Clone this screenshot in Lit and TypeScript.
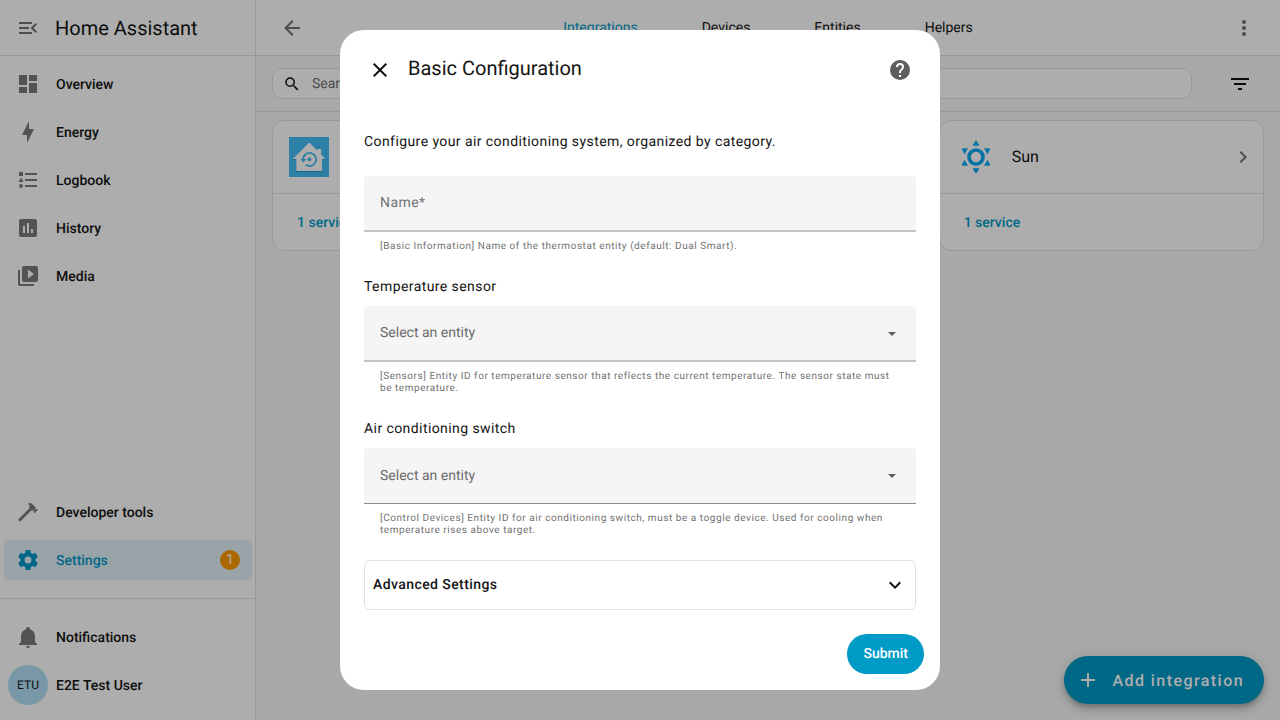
import { LitElement, html, css } from "lit";
import { customElement, property } from "lit/decorators.js";

const ICONS: Record<string, string> = {
  menuOpen:
    "M21,15.61L19.59,17L14.58,12L19.59,7L21,8.39L17.44,12L21,15.61M3,6H16V8H3V6M3,13V11H13V13H3M3,18V16H16V18H3Z",
  dashboard: "M13,3V9H21V3M13,21H21V11H13M3,21H11V15H3M3,13H11V3H3V13Z",
  bolt: "M11 15H6L13 1V9H18L11 23V15Z",
  logbook:
    "M5,9.5L7.5,14H2.5L5,9.5M3,4H7V8H3V4M5,20A2,2 0 0,0 7,18A2,2 0 0,0 5,16A2,2 0 0,0 3,18A2,2 0 0,0 5,20M9,5V7H21V5H9M9,19H21V17H9V19M9,11V13H21V11H9Z",
  chart:
    "M9 17H7V10H9V17M13 17H11V7H13V17M17 17H15V13H17V17M19 3H5C3.89 3 3 3.89 3 5V19C3 20.11 3.89 21 5 21H19C20.11 21 21 20.11 21 19V5C21 3.89 20.11 3 19 3Z",
  media:
    "M4,6H2V20A2,2 0 0,0 4,22H18V20H4V6M20,2H8A2,2 0 0,0 6,4V16A2,2 0 0,0 8,18H20A2,2 0 0,0 22,16V4A2,2 0 0,0 20,2M12,14.5V5.5L18,10L12,14.5Z",
  hammer:
    "M2 19.63L13.43 8.2L12.72 7.5L14.14 6.07L12 3.89C13.2 2.7 15.09 2.7 16.27 3.89L19.87 7.5L18.45 8.91H21.29L22 9.62L18.45 13.21L17.74 12.5V9.62L16.27 11.04L15.56 10.33L4.13 21.76L2 19.63Z",
  cog: "M12,15.5A3.5,3.5 0 0,1 8.5,12A3.5,3.5 0 0,1 12,8.5A3.5,3.5 0 0,1 15.5,12A3.5,3.5 0 0,1 12,15.5M19.43,12.97C19.47,12.65 19.5,12.33 19.5,12C19.5,11.67 19.47,11.34 19.43,11L21.54,9.37C21.73,9.22 21.78,8.95 21.66,8.73L19.66,5.27C19.54,5.05 19.27,4.96 19.05,5.05L16.56,6.05C16.04,5.66 15.5,5.32 14.87,5.07L14.5,2.42C14.46,2.18 14.25,2 14,2H10C9.75,2 9.54,2.18 9.5,2.42L9.13,5.07C8.5,5.32 7.96,5.66 7.44,6.05L4.95,5.05C4.73,4.96 4.46,5.05 4.34,5.27L2.34,8.73C2.21,8.95 2.27,9.22 2.46,9.37L4.57,11C4.53,11.34 4.5,11.67 4.5,12C4.5,12.33 4.53,12.65 4.57,12.97L2.46,14.63C2.27,14.78 2.21,15.05 2.34,15.27L4.34,18.73C4.46,18.95 4.73,19.03 4.95,18.95L7.44,17.94C7.96,18.34 8.5,18.68 9.13,18.93L9.5,21.58C9.54,21.82 9.75,22 10,22H14C14.25,22 14.46,21.82 14.5,21.58L14.87,18.93C15.5,18.67 16.04,18.34 16.56,17.94L19.05,18.95C19.27,19.03 19.54,18.95 19.66,18.73L21.66,15.27C21.78,15.05 21.73,14.78 21.54,14.63L19.43,12.97Z",
  bell: "M21,19V20H3V19L5,17V11C5,7.9 7.03,5.17 10,4.29C10,4.19 10,4.1 10,4A2,2 0 0,1 12,2A2,2 0 0,1 14,4C14,4.1 14,4.19 14,4.29C16.97,5.17 19,7.9 19,11V17L21,19M14,21A2,2 0 0,1 12,23A2,2 0 0,1 10,21",
  back: "M20,11V13H8L13.5,18.5L12.08,19.92L4.16,12L12.08,4.08L13.5,5.5L8,11H20Z",
  search:
    "M9.5,3A6.5,6.5 0 0,1 16,9.5C16,11.11 15.41,12.59 14.44,13.73L14.71,14H15.5L20.5,19L19,20.5L14,15.5V14.71L13.73,14.44C12.59,15.41 11.11,16 9.5,16A6.5,6.5 0 0,1 3,9.5A6.5,6.5 0 0,1 9.5,3M9.5,5C7,5 5,7 5,9.5C5,12 7,14 9.5,14C12,14 14,12 14,9.5C14,7 12,5 9.5,5Z",
  dots: "M12,16A2,2 0 0,1 14,18A2,2 0 0,1 12,20A2,2 0 0,1 10,18A2,2 0 0,1 12,16M12,10A2,2 0 0,1 14,12A2,2 0 0,1 12,14A2,2 0 0,1 10,12A2,2 0 0,1 12,10M12,4A2,2 0 0,1 14,6A2,2 0 0,1 12,8A2,2 0 0,1 10,6A2,2 0 0,1 12,4Z",
  filter: "M6,13H18V11H6M3,6V8H21V6M10,18H14V16H10V18Z",
  right: "M8.59,16.58L13.17,12L8.59,7.41L10,6L16,12L10,18L8.59,16.58Z",
  down: "M7.41,8.58L12,13.17L16.59,8.58L18,10L12,16L6,10L7.41,8.58Z",
  close:
    "M19,6.41L17.59,5L12,10.59L6.41,5L5,6.41L10.59,12L5,17.59L6.41,19L12,13.41L17.59,19L19,17.59L13.41,12L19,6.41Z",
  help: "M15.07,11.25L14.17,12.17C13.45,12.89 13,13.5 13,15H11V14.5C11,13.39 11.45,12.39 12.17,11.67L13.41,10.41C13.78,10.05 14,9.55 14,9C14,7.89 13.1,7 12,7A2,2 0 0,0 10,9H8A4,4 0 0,1 12,5A4,4 0 0,1 16,9C16,9.88 15.64,10.67 15.07,11.25M13,19H11V17H13M12,2A10,10 0 0,0 2,12A10,10 0 0,0 12,22A10,10 0 0,0 22,12C22,6.47 17.5,2 12,2Z",
  plus: "M19,13H13V19H11V13H5V11H11V5H13V11H19V13Z",
  caret: "M8,10L12,14L16,10H8Z",
  sun: "M12,6.7A5.3,5.3 0 0,1 17.3,12A5.3,5.3 0 0,1 12,17.3A5.3,5.3 0 0,1 6.7,12A5.3,5.3 0 0,1 12,6.7M12,8.9A3.1,3.1 0 0,0 8.9,12A3.1,3.1 0 0,0 12,15.1A3.1,3.1 0 0,0 15.1,12A3.1,3.1 0 0,0 12,8.9M12,2L14.1,5.2H9.9ZM12,22L9.9,18.8H14.1ZM3.34,6.9L7.2,6.8L5.1,10.4ZM20.66,6.9L18.9,10.4L16.8,6.8ZM3.34,17.1L5.1,13.6L7.2,17.2ZM20.66,17.1L16.8,17.2L18.9,13.6Z",
};

const base = css`
  * {
    box-sizing: border-box;
  }
  a {
    color: inherit;
    text-decoration: none;
  }
  button {
    font: inherit;
    color: inherit;
    letter-spacing: inherit;
    text-rendering: inherit;
    background: none;
    border: 0;
    padding: 0;
    cursor: pointer;
  }
  input,
  select {
    text-rendering: inherit;
  }
  h1,
  h2,
  p {
    margin: 0;
    font-weight: 400;
  }
`;

@customElement("ha-icon")
class HaIcon extends LitElement {
  @property() name = "";
  static styles = css`
    :host {
      display: block;
      flex: none;
      width: 24px;
      height: 24px;
    }
    svg {
      display: block;
      width: 100%;
      height: 100%;
      fill: currentColor;
    }
  `;
  render() {
    return html`<svg viewBox="0 0 24 24" aria-hidden="true">
      <path d=${ICONS[this.name] ?? ""}></path>
    </svg>`;
  }
}

@customElement("ha-sidebar")
class HaSidebar extends LitElement {
  static styles = [
    base,
    css`
      :host {
        display: flex;
        flex-direction: column;
        background: #fff;
        border-right: 1px solid #e0e0e0;
        font-size: 14px;
        font-weight: 500;
      }
      .head {
        display: flex;
        align-items: center;
        gap: 15px;
        height: 56px;
        padding: 0 16px;
        border-bottom: 1px solid #e0e0e0;
      }
      .toggle {
        color: #727272;
      }
      .title {
        font-size: 20px;
        line-height: 24px;
      }
      .list {
        display: flex;
        flex-direction: column;
        gap: 8px;
        padding: 8px 3px 8px 4px;
      }
      .lower {
        margin-top: auto;
        padding-bottom: 18px;
      }
      .user {
        border-top: 1px solid #e0e0e0;
        padding-top: 18px;
        padding-bottom: 15px;
      }
      .item {
        display: flex;
        align-items: center;
        gap: 16px;
        height: 40px;
        padding: 0 12px;
        border-radius: 4px;
      }
      .item ha-icon {
        color: #7b7b7b;
      }
      .label {
        flex: 1;
        padding-top: 2px;
        line-height: 20px;
      }
      .active {
        background: #e0f2f7;
        color: #009ac7;
      }
      .active ha-icon {
        color: #009ac7;
      }
      .badge {
        display: grid;
        place-items: center;
        width: 20px;
        height: 20px;
        border-radius: 10px;
        background: #ff9800;
        color: #fff;
        font-weight: 400;
      }
      .profile {
        gap: 8px;
        padding: 0 4px;
      }
      .avatar {
        display: grid;
        place-items: center;
        width: 40px;
        height: 40px;
        border-radius: 20px;
        background: #b3e0f6;
        font-size: 12px;
        font-weight: 400;
      }
    `,
  ];
  item(icon: string, label: string) {
    return html`<a class="item" href="#">
      <ha-icon name=${icon}></ha-icon><span class="label">${label}</span>
    </a>`;
  }
  render() {
    return html`
      <div class="head">
        <button class="toggle" aria-label="Collapse sidebar">
          <ha-icon name="menuOpen"></ha-icon>
        </button>
        <h1 class="title">Home Assistant</h1>
      </div>
      <nav class="list">
        ${this.item("dashboard", "Overview")} ${this.item("bolt", "Energy")}
        ${this.item("logbook", "Logbook")} ${this.item("chart", "History")}
        ${this.item("media", "Media")}
      </nav>
      <nav class="list lower">
        ${this.item("hammer", "Developer tools")}
        <a class="item active" href="#" aria-current="page">
          <ha-icon name="cog"></ha-icon><span class="label">Settings</span>
          <span class="badge">1</span>
        </a>
      </nav>
      <nav class="list user">
        ${this.item("bell", "Notifications")}
        <a class="item profile" href="#">
          <span class="avatar">ETU</span><span class="label">E2E Test User</span>
        </a>
      </nav>
    `;
  }
}

@customElement("ha-integrations")
class HaIntegrations extends LitElement {
  static styles = [
    base,
    css`
      :host {
        position: relative;
        display: flex;
        flex-direction: column;
        min-width: 0;
        background: #fafafa;
        font-size: 14px;
      }
      .bar {
        display: flex;
        align-items: center;
        height: 56px;
        padding: 0 24px;
        background: #fff;
        border-bottom: 1px solid #e0e0e0;
        color: #727272;
      }
      .tabs {
        display: flex;
        flex: 1;
        justify-content: center;
        color: #141414;
      }
      .tab {
        padding: 0 32px;
        line-height: 20px;
      }
      .current {
        color: #009ac7;
      }
      .tools {
        display: flex;
        align-items: center;
        gap: 36px;
        height: 56px;
        padding: 0 28px 0 16px;
        border-bottom: 1px solid #e0e0e0;
      }
      .search {
        display: flex;
        flex: 1;
        align-items: center;
        gap: 11px;
        height: 31px;
        padding: 0 10px;
        background: #fff;
        border: 1px solid #e0e0e0;
        border-radius: 10px;
      }
      .search ha-icon {
        width: 18px;
        height: 18px;
      }
      .query {
        flex: 1;
        min-width: 0;
        border: 0;
        outline: 0;
        background: none;
        padding: 0;
        font: inherit;
      }
      .query::placeholder {
        color: #727272;
        opacity: 1;
      }
      .grid {
        display: grid;
        grid-template-columns: repeat(3, minmax(0, 1fr));
        gap: 8px;
        padding: 8px 16px;
      }
      .card {
        background: #fff;
        border: 1px solid #e0e0e0;
        border-radius: 12px;
      }
      .top {
        display: flex;
        align-items: center;
        gap: 16px;
        height: 73px;
        padding: 0 8px 0 16px;
        border-bottom: 1px solid #e0e0e0;
      }
      .logo {
        display: block;
        width: 40px;
        height: 40px;
      }
      .sun {
        color: #03a9f4;
      }
      .name {
        flex: 1;
        font-size: 16px;
        line-height: 24px;
      }
      .chev {
        color: #727272;
      }
      .foot {
        display: flex;
        align-items: center;
        height: 56px;
        padding: 2px 24px 0;
        color: #009ac7;
        font-weight: 500;
      }
      .fab {
        position: absolute;
        right: 16px;
        bottom: 16px;
        display: flex;
        align-items: center;
        gap: 12px;
        height: 48px;
        padding: 0 20px 0 12px;
        border-radius: 24px;
        background: #009ac7;
        color: #fff;
        font-size: 16px;
        font-weight: 500;
        letter-spacing: 0.09em;
        box-shadow:
          0 3px 5px -1px rgba(0, 0, 0, 0.2),
          0 6px 10px 0 rgba(0, 0, 0, 0.14),
          0 1px 18px 0 rgba(0, 0, 0, 0.12);
      }
    `,
  ];
  card(logo: unknown, name: string) {
    return html`<article class="card">
      <div class="top">
        ${logo}
        <h2 class="name">${name}</h2>
        <ha-icon class="chev" name="right"></ha-icon>
      </div>
      <div class="foot"><a href="#">1 service</a></div>
    </article>`;
  }
  render() {
    const backup = html`<svg class="logo" viewBox="0 0 40 40" aria-hidden="true">
      <rect width="40" height="40" fill="#41bdf5"></rect>
      <path
        d="M3.7 22.5L20.3 6.5L28.3 14V13H32.3V18L36.3 22.5H33V34.8H7.3V22.5Z"
        fill="#1c7fac"
      ></path>
      <path
        d="M3.7 22L20.3 5.5L28.3 13.5V12H32.3V17.5L36.3 22H33V34H7.3V22Z"
        fill="#fff"
      ></path>
      <path
        d="M14 22.3A6.6 6.6 0 1 1 16.7 27.8"
        fill="none"
        stroke="#41bdf5"
        stroke-width="1.8"
      ></path>
      <path d="M11.5 22H17.5L14.2 25.5Z" fill="#41bdf5"></path>
      <circle cx="20.5" cy="22.3" r="1.9" fill="#41bdf5"></circle>
    </svg>`;
    return html`
      <header class="bar">
        <button aria-label="Back"><ha-icon name="back"></ha-icon></button>
        <nav class="tabs">
          <a class="tab current" href="#">Integrations</a>
          <a class="tab" href="#">Devices</a>
          <a class="tab" href="#">Entities</a>
          <a class="tab" href="#">Helpers</a>
        </nav>
        <button aria-label="More"><ha-icon name="dots"></ha-icon></button>
      </header>
      <div class="tools">
        <div class="search">
          <ha-icon name="search"></ha-icon>
          <input
            class="query"
            type="search"
            aria-label="Search integrations"
            placeholder="Search integrations"
          />
        </div>
        <button aria-label="Filter"><ha-icon name="filter"></ha-icon></button>
      </div>
      <main class="grid">
        ${this.card(backup, "Backup")} ${this.card(backup, "Home Assistant")}
        ${this.card(html`<ha-icon class="logo sun" name="sun"></ha-icon>`, "Sun")}
      </main>
      <button class="fab"><ha-icon name="plus"></ha-icon>Add integration</button>
    `;
  }
}

@customElement("config-dialog")
class ConfigDialog extends LitElement {
  static styles = [
    base,
    css`
      :host {
        display: flex;
        flex-direction: column;
        width: 100%;
        max-width: 600px;
        background: #fff;
        border-radius: 24px;
        font-size: 14px;
      }
      .head {
        display: flex;
        align-items: center;
        gap: 16px;
        padding: 28px 28px 24px;
      }
      .title {
        flex: 1;
        font-size: 20px;
        line-height: 20px;
        padding-bottom: 4px;
      }
      .help {
        color: #5e5e5e;
      }
      .body {
        padding: 0 24px;
        letter-spacing: 0.03em;
      }
      .intro,
      .caption {
        display: block;
        line-height: 20px;
      }
      .intro {
        padding: 26px 0 24px;
      }
      .caption {
        padding: 1px 0 9px;
      }
      .field {
        display: block;
        width: 100%;
        height: 56px;
        padding: 0 16px;
        border: 0;
        border-bottom: 2px solid #c4c4c4;
        border-radius: 4px 4px 0 0;
        background: #f5f5f5;
        color: #6b6b6b;
        font: inherit;
        outline: 0;
        appearance: none;
      }
      .field::placeholder {
        color: #727272;
        opacity: 1;
      }
      .text {
        letter-spacing: 0.03em;
      }
      .thin {
        border-bottom: 1px solid #8c8c8c;
      }
      .pick {
        display: grid;
        align-items: center;
      }
      .pick > * {
        grid-area: 1 / 1;
      }
      .pick ha-icon {
        justify-self: end;
        margin-right: 12px;
        color: #5e5e5e;
        pointer-events: none;
      }
      .hint {
        padding: 9px 16px 23px;
        font-size: 10px;
        line-height: 12px;
        letter-spacing: 0.055em;
        color: #727272;
      }
      .expand {
        display: flex;
        align-items: center;
        justify-content: space-between;
        width: 100%;
        height: 50px;
        padding: 0 8px;
        border: 1px solid #e0e0e0;
        border-radius: 6px;
        font-weight: 500;
      }
      .foot {
        display: flex;
        justify-content: flex-end;
        padding: 24px 16px 16px;
      }
      .submit {
        height: 40px;
        padding: 0 16px;
        border-radius: 20px;
        background: #009ac7;
        color: #fff;
        font-weight: 500;
      }
    `,
  ];
  picker(id: string, caption: string, hint: string, thin = false) {
    return html`
      <label class="caption" for=${id}>${caption}</label>
      <div class="pick">
        <select class="field ${thin ? "thin" : ""}" id=${id} aria-describedby="${id}-hint">
          <option>Select an entity</option>
        </select>
        <ha-icon name="caret"></ha-icon>
      </div>
      <p class="hint" id="${id}-hint">${hint}</p>
    `;
  }
  render() {
    return html`
      <div class="head">
        <button aria-label="Close"><ha-icon name="close"></ha-icon></button>
        <h2 class="title">Basic Configuration</h2>
        <button class="help" aria-label="Help"><ha-icon name="help"></ha-icon></button>
      </div>
      <div class="body">
        <p class="intro">Configure your air conditioning system, organized by category.</p>
        <input
          class="field text"
          type="text"
          placeholder="Name*"
          aria-label="Name"
          aria-describedby="name-hint"
          required
        />
        <p class="hint" id="name-hint">
          [Basic Information] Name of the thermostat entity (default: Dual Smart).
        </p>
        ${this.picker(
          "sensor",
          "Temperature sensor",
          "[Sensors] Entity ID for temperature sensor that reflects the current temperature. The sensor state must be temperature."
        )}
        ${this.picker(
          "switch",
          "Air conditioning switch",
          "[Control Devices] Entity ID for air conditioning switch, must be a toggle device. Used for cooling when temperature rises above target.",
          true
        )}
        <button class="expand" aria-expanded="false">
          Advanced Settings<ha-icon name="down"></ha-icon>
        </button>
      </div>
      <div class="foot"><button class="submit">Submit</button></div>
    `;
  }
}

@customElement("app-root")
class AppRoot extends LitElement {
  static styles = [
    base,
    css`
      :host {
        display: block;
        font-family: Roboto, "Noto Sans", sans-serif;
        color: #141414;
        text-rendering: geometricPrecision;
        -webkit-font-smoothing: antialiased;
      }
      .shell {
        display: grid;
        grid-template-columns: 256px minmax(0, 1fr);
        min-height: 100vh;
      }
      .scrim {
        position: fixed;
        inset: 0;
        display: grid;
        place-items: center;
        overflow: auto;
        background: rgba(0, 0, 0, 0.32);
      }
    `,
  ];
  render() {
    return html`
      <div class="shell">
        <ha-sidebar></ha-sidebar>
        <ha-integrations></ha-integrations>
      </div>
      <div class="scrim">
        <config-dialog role="dialog" aria-modal="true" aria-label="Basic Configuration"></config-dialog>
      </div>
    `;
  }
}
